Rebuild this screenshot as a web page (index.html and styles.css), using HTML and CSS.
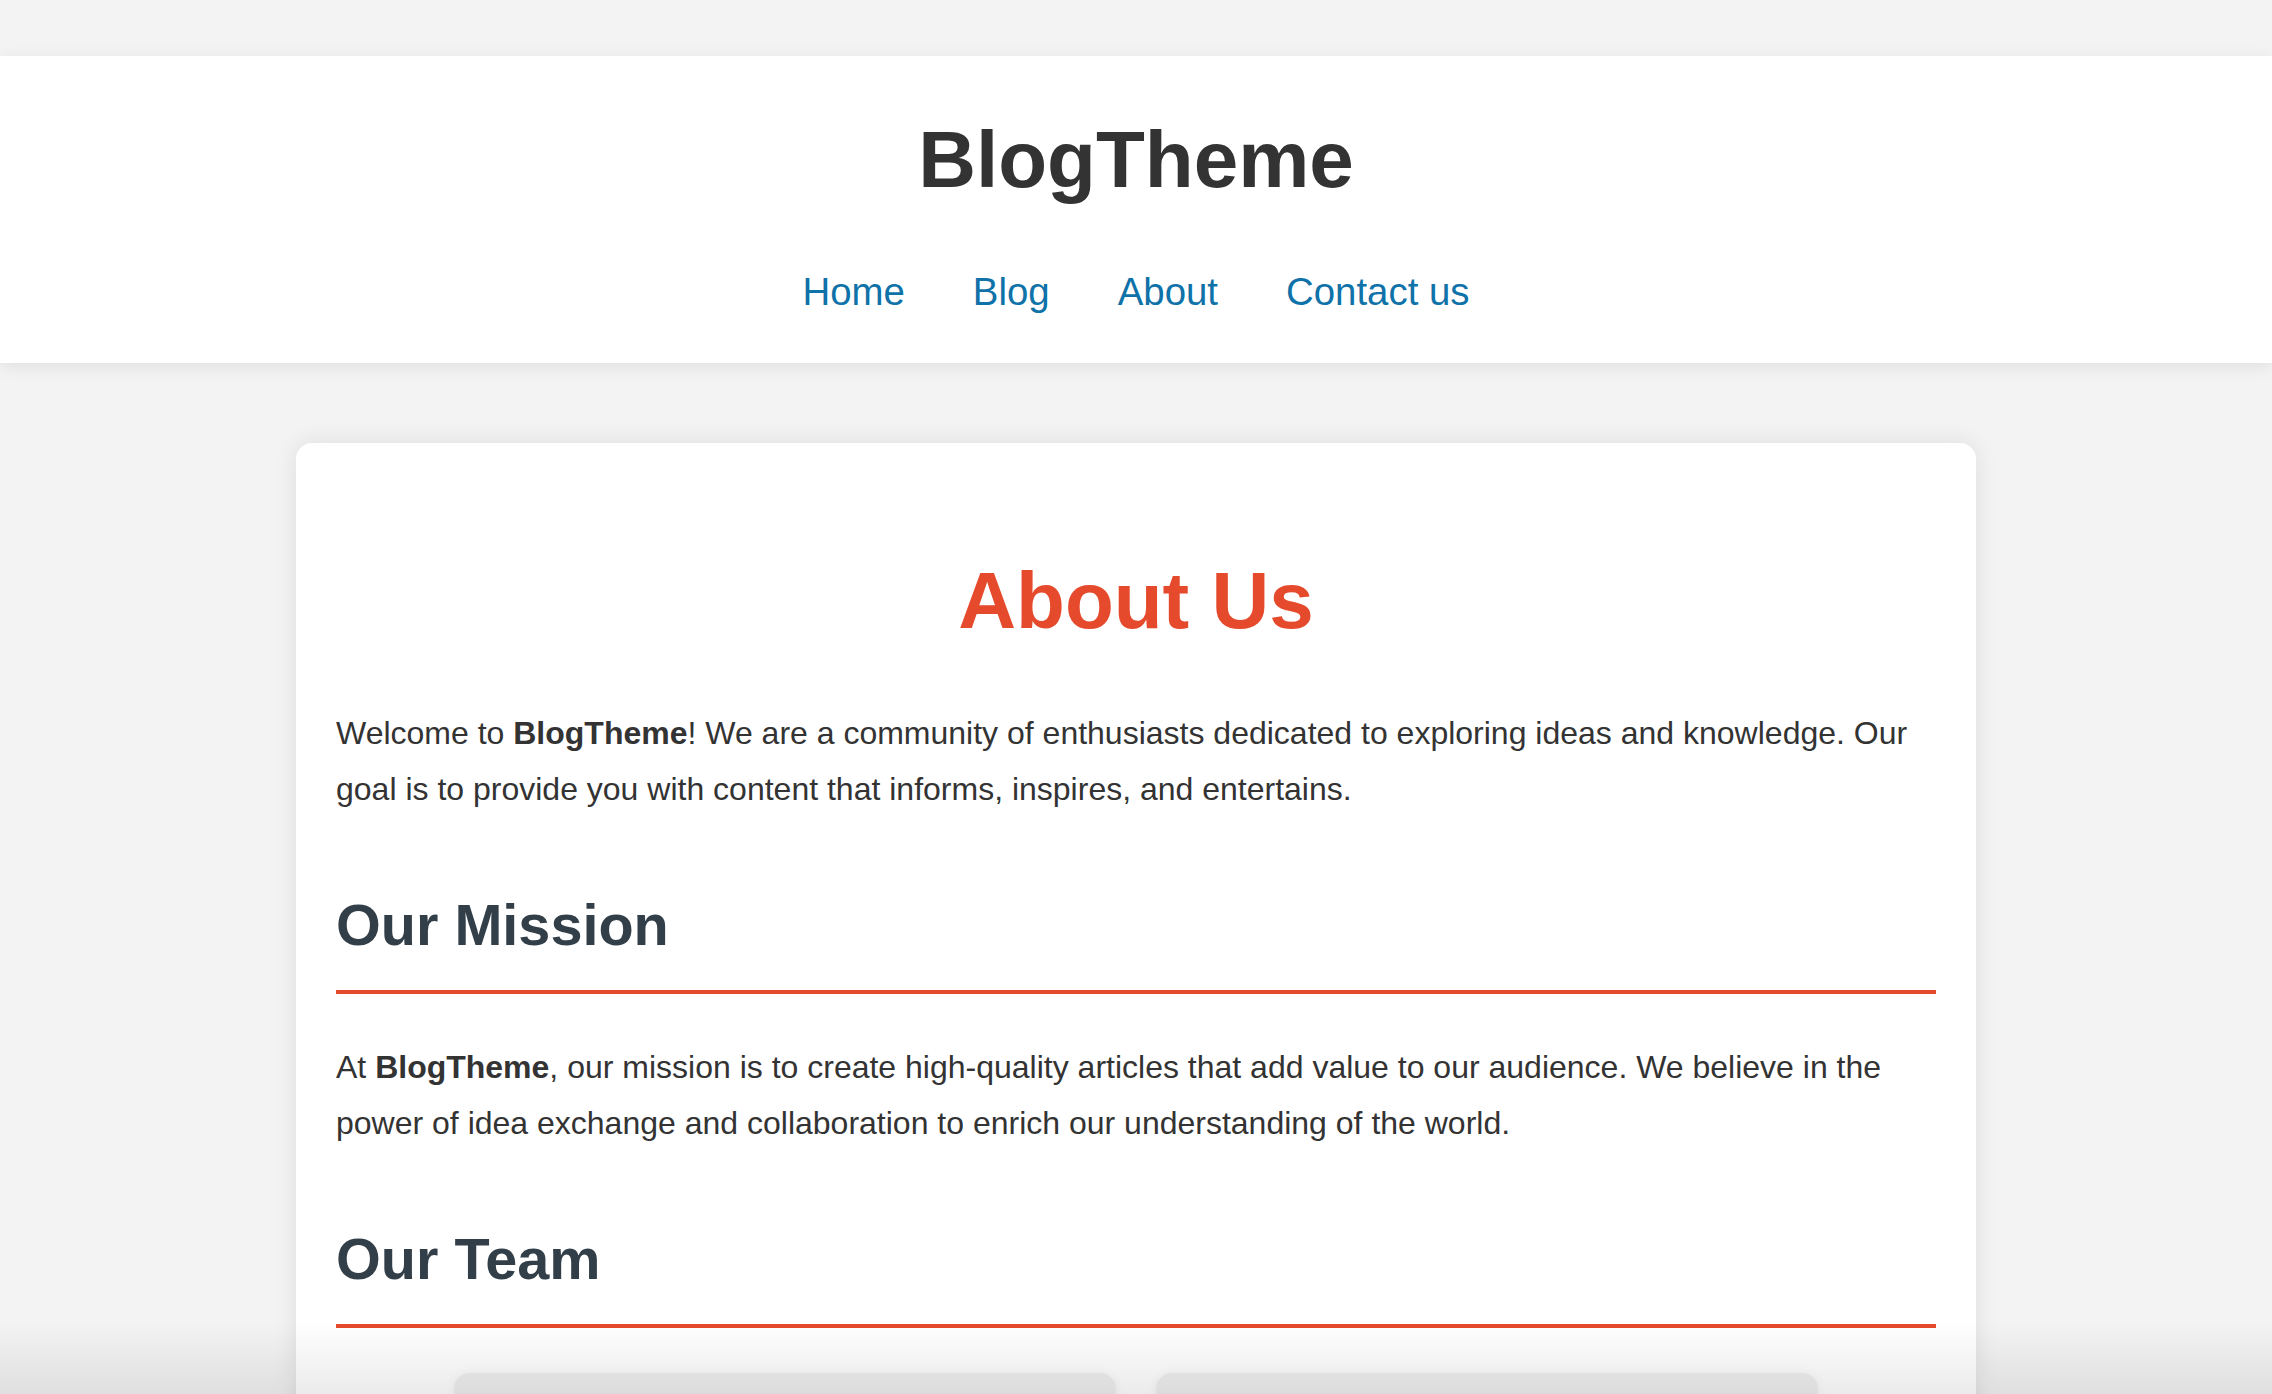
FILE: index.html
```html
<!DOCTYPE html>
<html lang="en">
<head>
<meta charset="utf-8">
<title>About Us - BlogTheme</title>
<link rel="stylesheet" href="styles.css">
</head>
<body>
<header class="site-header">
  <h1 class="site-title">BlogTheme</h1>
  <nav class="site-nav">
    <a href="#">Home</a>
    <a href="#">Blog</a>
    <a href="#">About</a>
    <a href="#">Contact us</a>
  </nav>
</header>
<main class="card">
  <h1 class="page-title">About Us</h1>
  <p class="text">Welcome to <strong>BlogTheme</strong>! We are a community of enthusiasts dedicated to exploring ideas and knowledge. Our goal is to provide you with content that informs, inspires, and entertains.</p>
  <h2 class="section-title">Our Mission</h2>
  <p class="text">At <strong>BlogTheme</strong>, our mission is to create high-quality articles that add value to our audience. We believe in the power of idea exchange and collaboration to enrich our understanding of the world.</p>
  <h2 class="section-title">Our Team</h2>
  <div class="team">
    <div class="member"></div>
    <div class="member"></div>
  </div>
</main>
<div class="bottom-fade"></div>
</body>
</html>
```
FILE: styles.css
```css
html, body {
  margin: 0;
  padding: 0;
}
body {
  background: #f3f3f3;
  font-family: "Liberation Sans", Arial, Helvetica, sans-serif;
  color: #333;
}
.site-header {
  margin-top: 56px;
  background: #fff;
  text-align: center;
  padding: 56px 0 48px;
  box-shadow: 0 4px 16px rgba(0, 0, 0, 0.08);
  position: relative;
}
.site-title {
  margin: 0;
  font-size: 80px;
  line-height: 96px;
  font-weight: bold;
  color: #333;
}
.site-nav {
  margin-top: 61px;
  display: flex;
  justify-content: center;
  gap: 68px;
  font-size: 38.4px;
  line-height: 46px;
}
.site-nav a {
  color: #0f72a8;
  text-decoration: none;
}
.card {
  width: 1600px;
  margin: 80px auto 0;
  background: #fff;
  border-radius: 16px;
  padding: 110px 40px 40px;
  box-shadow: 0 0 24px rgba(0, 0, 0, 0.09);
}
.page-title {
  margin: 0 0 56px;
  text-align: center;
  font-size: 80px;
  line-height: 96px;
  font-weight: bold;
  color: #e64a2c;
}
.text {
  margin: 0;
  font-size: 32px;
  line-height: 56px;
  color: #333;
}
.section-title {
  margin: 74px 0 45px;
  font-size: 57.6px;
  line-height: 69px;
  font-weight: bold;
  color: #333f48;
  padding-bottom: 30px;
  border-bottom: 4px solid #e64a2c;
}
.team {
  display: flex;
  justify-content: center;
  gap: 40px;
  margin-top: 2px;
}
.member {
  width: 662px;
  height: 300px;
  background: #efefef;
  border-radius: 16px;
  box-shadow: 0 0 12px rgba(0, 0, 0, 0.05);
}
.bottom-fade {
  position: fixed;
  left: 0;
  right: 0;
  bottom: 0;
  height: 72px;
  background: linear-gradient(to bottom, rgba(0, 0, 0, 0), rgba(0, 0, 0, 0.08));
  pointer-events: none;
}
```
